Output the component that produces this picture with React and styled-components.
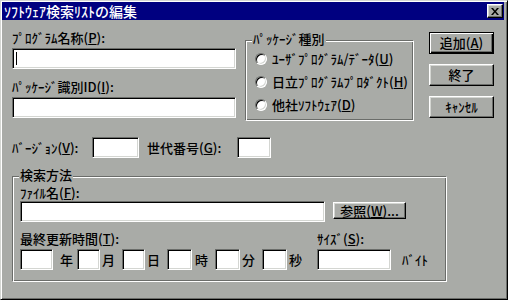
import React from "react";
import styled, { createGlobalStyle } from "styled-components";

const FACE = "#a9aba7";
const SHADOW = "#6b6d6a";
const LIGHT = "#d4d6d2";

const GlobalStyle = createGlobalStyle`
  html, body {
    margin: 0;
    padding: 0;
    background: ${FACE};
  }
`;

const Window = styled.div`
  box-sizing: border-box;
  width: 508px;
  height: 300px;
  background: ${FACE};
  border: 1px solid;
  border-color: ${LIGHT} #000 #000 ${LIGHT};
  box-shadow: inset 1px 1px #fff, inset -1px -1px ${SHADOW};
  padding: 1px 3px 0 1px;
  font-family: "Noto Sans CJK JP", sans-serif;
  font-size: 13px;
  font-weight: 500;
  line-height: 14px;
  color: #000;
`;

const TitleBar = styled.div`
  height: 18px;
  background: #000080;
  display: flex;
  align-items: center;
  justify-content: space-between;
  padding: 0 1px 0 2px;
  color: #fff;
  font-size: 14px;
`;

const CloseButton = styled.div`
  box-sizing: border-box;
  width: 16px;
  height: 14px;
  background: ${FACE};
  border: 1px solid;
  border-color: #fff #000 #000 #fff;
  box-shadow: inset -1px -1px ${SHADOW}, inset 1px 1px ${LIGHT};
  display: flex;
  align-items: center;
  justify-content: center;
`;

const Body = styled.div`
  padding-left: 10px;
`;

const TopRow = styled.div`
  display: flex;
  align-items: flex-start;
  height: 117px;
`;

const LeftCol = styled.div`
  width: 224px;
  padding-top: 11px;
`;

const Label = styled.div`
  height: 14px;
  white-space: nowrap;
  margin-top: ${(p) => p.$top || 0}px;
  margin-bottom: ${(p) => (p.$mb === undefined ? 3 : p.$mb)}px;
  width: ${(p) => (p.$w ? `${p.$w}px` : "auto")};
  flex: none;
`;

const Field = styled.div`
  box-sizing: border-box;
  width: ${(p) => p.$w}px;
  height: 21px;
  flex: none;
  margin-left: ${(p) => p.$ml || 0}px;
  background: #fff;
  border: 1px solid;
  border-color: ${SHADOW} #fff #fff ${SHADOW};
  box-shadow: inset 1px 1px #000, inset -1px -1px ${LIGHT};
  display: flex;
  align-items: center;
  padding-left: 3px;
`;

const Caret = styled.span`
  width: 1px;
  height: 13px;
  background: #000;
`;

const Group = styled.div`
  position: relative;
  box-sizing: border-box;
  flex: none;
  width: ${(p) => p.$w}px;
  height: ${(p) => p.$h}px;
  margin-left: ${(p) => p.$ml || 0}px;
  margin-top: ${(p) => p.$mt || 0}px;
  border: 1px solid;
  border-color: ${SHADOW} #fff #fff ${SHADOW};
  box-shadow: inset 1px 1px #fff, inset -1px -1px ${SHADOW};
  padding: ${(p) => p.$pad};
`;

const Legend = styled.span`
  position: absolute;
  left: 6px;
  top: -9px;
  padding: 0 1px;
  background: ${FACE};
  white-space: nowrap;
`;

const RadioRow = styled.div`
  display: flex;
  align-items: center;
  height: 23px;
  gap: 5px;
  white-space: nowrap;
`;

const RadioDot = styled.span`
  box-sizing: border-box;
  width: 12px;
  height: 12px;
  flex: none;
  border-radius: 50%;
  background: #fff;
  border: 1px solid;
  border-color: ${SHADOW} #fff #fff ${SHADOW};
  box-shadow: inset 1px 1px #000, inset -1px -1px ${LIGHT};
`;

const ButtonCol = styled.div`
  display: flex;
  flex-direction: column;
  gap: 10px;
  margin-left: 15px;
  margin-top: 12px;
`;

const Button = styled.div`
  box-sizing: border-box;
  width: ${(p) => p.$w || 65}px;
  height: ${(p) => p.$h || 22}px;
  flex: none;
  margin-left: ${(p) => p.$ml || 0}px;
  margin-top: ${(p) => p.$mt || 0}px;
  display: flex;
  align-items: center;
  justify-content: center;
  white-space: nowrap;
  background: ${FACE};
  border: 1px solid;
  border-color: ${(p) => (p.$default ? "#000" : "#fff #000 #000 #fff")};
  box-shadow: ${(p) =>
    p.$default
      ? `inset 1px 1px #fff, inset -1px -1px #000, inset -2px -2px ${SHADOW}`
      : `inset -1px -1px ${SHADOW}, inset 1px 1px ${LIGHT}`};
`;

const Row = styled.div`
  display: flex;
  align-items: ${(p) => p.$align || "center"};
  margin-top: ${(p) => p.$mt || 0}px;
`;

const Unit = styled.span`
  flex: none;
  margin-left: ${(p) => p.$ml || 0}px;
  width: ${(p) => (p.$w ? `${p.$w}px` : "auto")};
  white-space: nowrap;
`;

const Key = styled.span`
  text-decoration: underline;
  text-underline-offset: 1px;
`;

const timeParts = [
  { w: 33, ml: 0, unit: "年", uml: 7 },
  { w: 23, ml: 4, unit: "月", uml: 2 },
  { w: 23, ml: 7, unit: "日", uml: 2 },
  { w: 25, ml: 7, unit: "時", uml: 3 },
  { w: 25, ml: 7, unit: "分", uml: 2 },
  { w: 25, ml: 7, unit: "秒", uml: 2 },
];

const CloseIcon = () => (
  <svg width="8" height="7" viewBox="0 0 8 7">
    <path d="M0 0h2l2 2.4L6 0h2L5 3.5 8 7H6L4 4.6 2 7H0l3-3.5z" fill="#000" />
  </svg>
);

export default function App() {
  return (
    <>
      <GlobalStyle />
      <Window>
        <TitleBar>
          <span>ｿﾌﾄｳｪｱ検索ﾘｽﾄの編集</span>
          <CloseButton>
            <CloseIcon />
          </CloseButton>
        </TitleBar>
        <Body>
          <TopRow>
            <LeftCol>
              <Label>
                ﾌﾟﾛｸﾞﾗﾑ名称(<Key>P</Key>):
              </Label>
              <Field $w={224}>
                <Caret />
              </Field>
              <Label $top={11}>
                ﾊﾟｯｹｰｼﾞ識別ID(<Key>I</Key>):
              </Label>
              <Field $w={224} />
            </LeftCol>
            <Group $w={169} $h={81} $ml={9} $mt={20} $pad="6px 0 0 9px">
              <Legend>ﾊﾟｯｹｰｼﾞ種別</Legend>
              <RadioRow>
                <RadioDot />
                <span>
                  ﾕｰｻﾞﾌﾟﾛｸﾞﾗﾑ/ﾃﾞｰﾀ(<Key>U</Key>)
                </span>
              </RadioRow>
              <RadioRow>
                <RadioDot />
                <span>
                  日立ﾌﾟﾛｸﾞﾗﾑﾌﾟﾛﾀﾞｸﾄ(<Key>H</Key>)
                </span>
              </RadioRow>
              <RadioRow>
                <RadioDot />
                <span>
                  他社ｿﾌﾄｳｪｱ(<Key>D</Key>)
                </span>
              </RadioRow>
            </Group>
            <ButtonCol>
              <Button $default>
                追加(<Key>A</Key>)
              </Button>
              <Button>終了</Button>
              <Button>ｷｬﾝｾﾙ</Button>
            </ButtonCol>
          </TopRow>

          <Row>
            <Label $w={80} $mb={0}>
              ﾊﾞｰｼﾞｮﾝ(<Key>V</Key>):
            </Label>
            <Field $w={47} />
            <Unit $ml={8} $w={90}>
              世代番号(<Key>G</Key>):
            </Unit>
            <Field $w={34} />
          </Row>

          <Group $w={435} $h={106} $mt={18} $pad="9px 0 0 7px">
            <Legend>検索方法</Legend>
            <Label $mb={1}>
              ﾌｧｲﾙ名(<Key>F</Key>):
            </Label>
            <Row $align="flex-start">
              <Field $w={305} />
              <Button $w={73} $h={17} $ml={8} $mt={1}>
                参照(<Key>W</Key>)...
              </Button>
            </Row>
            <Row $mt={10}>
              <Label $w={297}>
                最終更新時間(<Key>T</Key>):
              </Label>
              <Label>
                ｻｲｽﾞ(<Key>S</Key>):
              </Label>
            </Row>
            <Row>
              {timeParts.map((t) => (
                <React.Fragment key={t.unit}>
                  <Field $w={t.w} $ml={t.ml} />
                  <Unit $ml={t.uml}>{t.unit}</Unit>
                </React.Fragment>
              ))}
              <Field $w={74} $ml={15} />
              <Unit $ml={11}>ﾊﾞｲﾄ</Unit>
            </Row>
          </Group>
        </Body>
      </Window>
    </>
  );
}
